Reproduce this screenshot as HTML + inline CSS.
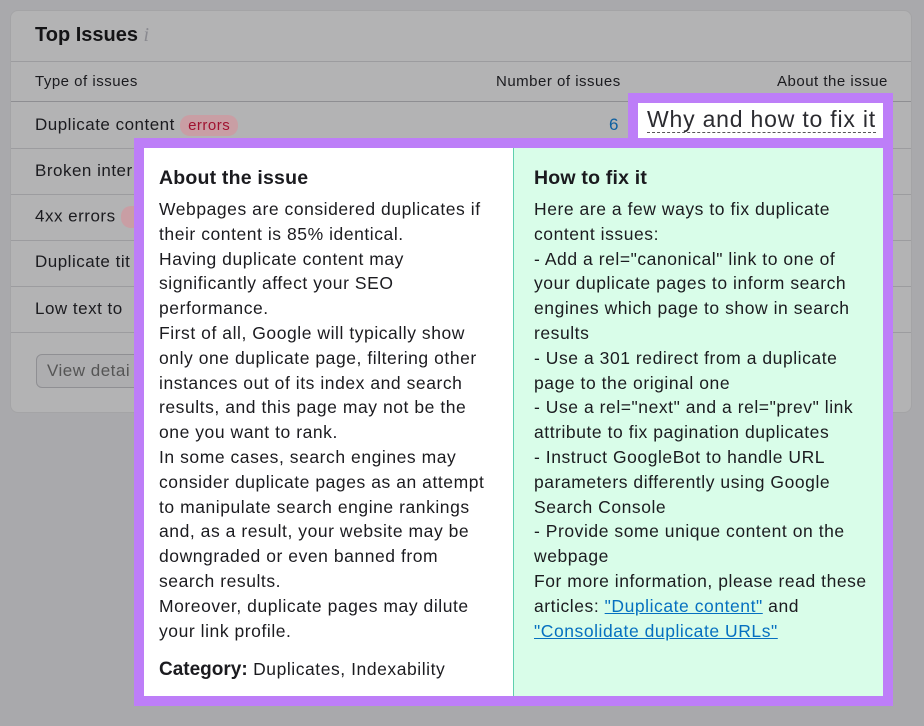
<!DOCTYPE html>
<html><head><meta charset="utf-8"><style>
body{margin:0;width:924px;height:726px;background:#a9a9ac;font-family:"Liberation Sans",sans-serif;position:relative;overflow:hidden;color:#1b1b1f;letter-spacing:0.5px}
.card{position:absolute;left:10px;top:10px;width:902px;height:403px;background:#b3b3b4;border-radius:8px;border:1px solid #a4a4a6;box-sizing:border-box}
.abs{position:absolute;white-space:nowrap}
.line{position:absolute;left:0;width:900px;height:1px;background:#9c9c9f}
.purple{position:absolute;background:#bd7ef8}
.col{position:absolute;top:148px;height:548px;box-sizing:border-box;padding:18px 15px;font-size:17.5px;line-height:24.8px;white-space:nowrap;letter-spacing:0.55px}
.col h3{margin:0 0 7px;font-size:19.5px;line-height:24px;letter-spacing:0.2px}
a{color:#0670c0;text-decoration:underline}
</style></head><body>
<div class="card">
 <div class="abs" style="left:24px;top:13px;font-size:20px;font-weight:bold;color:#141416;letter-spacing:0">Top Issues <span style="color:#8a8a90;font-style:italic;font-weight:normal;font-family:'Liberation Serif',serif">i</span></div>
 <div class="line" style="top:50px"></div>
 <div class="abs" style="left:24px;top:62px;font-size:15px">Type of issues</div>
 <div class="abs" style="left:485px;top:62px;font-size:15px">Number of issues</div>
 <div class="abs" style="left:766px;top:62px;font-size:15px">About the issue</div>
 <div class="line" style="top:90px;background:#8e8e92"></div>
 <div class="abs" style="left:24px;top:104px;font-size:17px">Duplicate content <span style="background:#c99ea4;color:#a01230;border-radius:10px;padding:2px 8px;font-size:15px">errors</span></div>
 <div class="abs" style="left:598px;top:104px;font-size:17px;color:#0d5fa0">6</div>
 <div class="line" style="top:137px"></div>
 <div class="abs" style="left:24px;top:150px;font-size:17px">Broken inter</div>
 <div class="line" style="top:183px"></div>
 <div class="abs" style="left:24px;top:195px;font-size:17px">4xx errors <span style="display:inline-block;width:16px;height:22px;background:#c99ea4;border-radius:10px 0 0 10px;vertical-align:middle"></span></div>
 <div class="line" style="top:229px"></div>
 <div class="abs" style="left:24px;top:241px;font-size:17px">Duplicate tit</div>
 <div class="line" style="top:275px"></div>
 <div class="abs" style="left:24px;top:288px;font-size:17px">Low text to</div>
 <div class="line" style="top:321px"></div>
 <div class="abs" style="left:25px;top:343px;width:120px;height:34px;border:1px solid #8f8f93;border-radius:6px;box-sizing:border-box;font-size:17px;color:#555;padding:6px 10px;background:#adadaf">View detai</div>
</div>
<div class="purple" style="left:628px;top:93px;width:265px;height:56px"></div>
<div class="abs" style="left:638px;top:103px;width:245px;height:35px;background:#fff"></div>
<div class="abs" style="left:647px;top:106px;font-size:23px;color:#2b2b30;border-bottom:1.5px dashed #555;line-height:26px;letter-spacing:0.8px">Why and how to fix it</div>
<div class="purple" style="left:134px;top:138px;width:759px;height:568px"></div>
<div class="col" style="left:144px;width:369px;background:#fff">
<h3>About the issue</h3>
Webpages are considered duplicates if<br>their content is 85% identical.<br>Having duplicate content may<br>significantly affect your SEO<br>performance.<br>First of all, Google will typically show<br>only one duplicate page, filtering other<br>instances out of its index and search<br>results, and this page may not be the<br>one you want to rank.<br>In some cases, search engines may<br>consider duplicate pages as an attempt<br>to manipulate search engine rankings<br>and, as a result, your website may be<br>downgraded or even banned from<br>search results.<br>Moreover, duplicate pages may dilute<br>your link profile.
<div style="margin-top:14px"><b style="font-size:19px;letter-spacing:0">Category:</b> Duplicates, Indexability</div>
</div>
<div class="col" style="left:513px;width:370px;background:#d9fde9;border-left:1px solid #5fcfae;padding-left:20px">
<h3>How to fix it</h3>
Here are a few ways to fix duplicate<br>content issues:<br>- Add a rel="canonical" link to one of<br>your duplicate pages to inform search<br>engines which page to show in search<br>results<br>- Use a 301 redirect from a duplicate<br>page to the original one<br>- Use a rel="next" and a rel="prev" link<br>attribute to fix pagination duplicates<br>- Instruct GoogleBot to handle URL<br>parameters differently using Google<br>Search Console<br>- Provide some unique content on the<br>webpage<br>For more information, please read these<br>articles: <a>"Duplicate content"</a> and<br><a>"Consolidate duplicate URLs"</a>
</div>
</body></html>
